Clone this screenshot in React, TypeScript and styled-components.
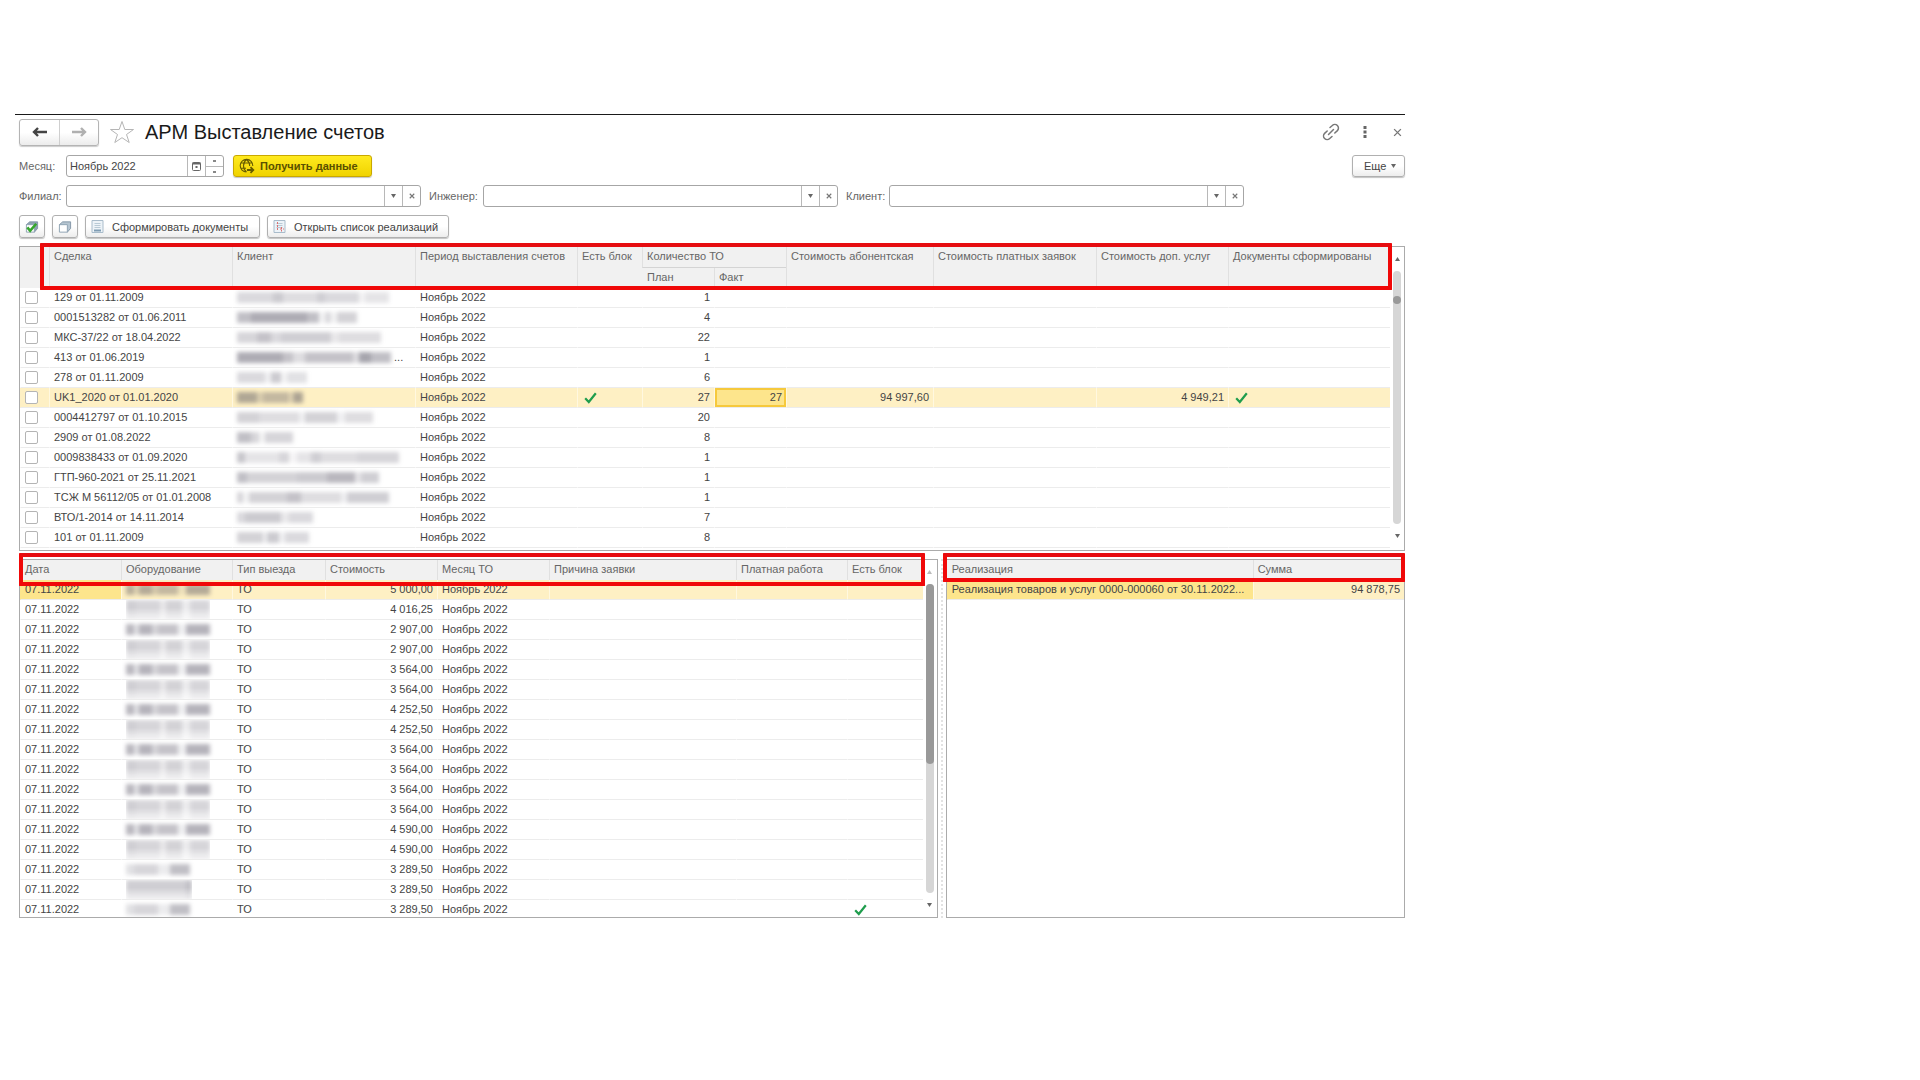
import React from 'react';
import styled, { createGlobalStyle, css } from 'styled-components';

const GlobalStyle = createGlobalStyle`
  * { box-sizing: border-box; }
  body {
    margin: 0;
    background: #fff;
    color: #444;
    font: 11px/20px "Liberation Sans", Arial, sans-serif;
  }
  button, input { font: inherit; color: inherit; }
`;

/* ---------- window frame ---------- */

const Page = styled.main`
  padding: 114px 15px 0;
`;

const Window = styled.section`
  width: 100%;
  max-width: 1390px;
  padding-left: 4px;
  border-top: 1px solid #1a1a1a;
`;

const Bar = styled.div<{ $height: number; $gap: number; $top: number }>`
  display: flex;
  align-items: center;
  height: ${p => p.$height}px;
  margin-top: ${p => p.$top}px;
  gap: ${p => p.$gap}px;
`;

const Spacer = styled.span`
  flex: 1;
`;

const Title = styled.h1`
  margin: 0;
  font-size: 20px;
  line-height: 28px;
  font-weight: 400;
  color: #1a1a1a;
  white-space: nowrap;
`;

const NavGroup = styled.div`
  display: flex;
  height: 27px;
  border: 1px solid #b4b4b4;
  border-radius: 3px;
  background: linear-gradient(#fff 50%, #ececec);
  box-shadow: 0 1px 1px #ccc;
`;

const NavButton = styled.button`
  width: 39px;
  padding: 0;
  display: grid;
  place-items: center;
  border: 0;
  background: none;
  & + & { border-left: 1px solid #cfcfcf; }
`;

const IconButton = styled.button<{ $width: number }>`
  width: ${p => p.$width}px;
  height: 24px;
  padding: 0;
  display: grid;
  place-items: center;
  border: 0;
  background: none;
`;

const buttonFace = css`
  display: flex;
  align-items: center;
  border: 1px solid #b0b0b0;
  border-radius: 3px;
  background: linear-gradient(#fff 50%, #ededed);
  box-shadow: 0 1px 1px #c4c4c4;
  white-space: nowrap;
`;

const ToolButton = styled.button<{ $width: number }>`
  ${buttonFace}
  width: ${p => p.$width}px;
  height: 23px;
  padding: 0 5px;
  gap: 8px;
`;

const PrimaryButton = styled.button`
  ${buttonFace}
  width: 139px;
  height: 22px;
  margin-left: 9px;
  padding: 0 5px;
  gap: 5px;
  border-color: #c9a800;
  background: linear-gradient(#ffea1f, #f0d300);
  font-weight: 700;
  color: #5a5000;
`;

const MoreButton = styled.button`
  ${buttonFace}
  width: 53px;
  height: 22px;
  padding: 0 5px 0 11px;
  gap: 5px;
`;

/* ---------- fields ---------- */

const Label = styled.label<{ $width: number }>`
  flex: 0 0 ${p => p.$width}px;
  color: #666;
  white-space: nowrap;
`;

const Field = styled.div<{ $width?: number }>`
  display: flex;
  flex: ${p => (p.$width ? `0 1 ${p.$width}px` : '1')};
  min-width: 0;
  height: 22px;
  border: 1px solid #a6a6a6;
  border-radius: 3px;
  background: #fff;
`;

const Input = styled.input`
  flex: 1;
  width: 0;
  min-width: 0;
  padding: 0 3px;
  border: 0;
  background: none;
  outline: none;
`;

const FieldButton = styled.button`
  flex: 0 0 18px;
  padding: 0;
  display: grid;
  place-items: center;
  border: 0;
  border-left: 1px solid #b8b8b8;
  background: none;
`;

const Stepper = styled.div`
  flex: 0 0 18px;
  display: grid;
  grid-template-rows: 1fr 1fr;
  border-left: 1px solid #b8b8b8;
`;

const StepButton = styled.button`
  padding: 0;
  display: grid;
  place-items: center;
  border: 0;
  background: none;
  & + & { border-top: 1px solid #b8b8b8; }
`;

const FilterPair = styled.div<{ $width: number }>`
  display: flex;
  flex: 0 1 ${p => p.$width}px;
  align-items: center;
  min-width: 0;
`;

/* ---------- panels and tables ---------- */

const Panel = styled.section`
  position: relative;
  display: flex;
  min-width: 0;
  min-height: 0;
  border: 1px solid #ababab;
`;

const Upper = styled(Panel)`
  margin-top: 8px;
  padding-bottom: 2px;
`;

const Lower = styled.div`
  display: grid;
  grid-template: 100% / 2fr 8px 1fr;
  height: 359px;
  margin-top: 8px;
`;

const Splitter = styled.div`
  justify-self: center;
  width: 2px;
  border-left: 2px dotted #e2e2e2;
`;

const Scroller = styled.div`
  flex: 1;
  min-width: 0;
  overflow: hidden;
`;

const Highlight = styled.div<{ $top: number; $left: number; $right: number; $height: number }>`
  position: absolute;
  top: ${p => p.$top}px;
  left: ${p => p.$left}px;
  right: ${p => p.$right}px;
  height: ${p => p.$height}px;
  border: 4px solid #f00808;
  border-top-color: #e60c10;
  border-radius: 1px;
  pointer-events: none;
`;

const Table = styled.table`
  width: 100%;
  table-layout: fixed;
  border-collapse: separate;
  border-spacing: 0;
`;

const Th = styled.th<{ $line?: boolean }>`
  height: 20px;
  padding: 0 0 0 4px;
  background: #f1f1f1;
  border-left: 1px solid #e0e0e0;
  ${p => p.$line && 'border-bottom: 1px solid #d4d4d4; height: 21px;'}
  font-weight: 400;
  line-height: 19px;
  text-align: left;
  vertical-align: top;
  white-space: nowrap;
  color: #666;
  &:first-child { border-left-color: #f1f1f1; }
`;

const Row = styled.tr<{ $selected?: boolean }>`
  background: ${p => (p.$selected ? '#fef0c4' : '#fff')};
  & > td { border-left-color: ${p => (p.$selected ? '#fff8e0' : 'transparent')}; }
  & > td:first-child { border-left-color: transparent; }
`;

const Td = styled.td<{ $num?: boolean; $active?: 'fill' | 'frame' }>`
  height: 20px;
  padding: 0 4px;
  border-left: 1px solid transparent;
  border-bottom: 1px solid #ececec;
  line-height: 19px;
  white-space: nowrap;
  overflow: hidden;
  text-overflow: ellipsis;
  text-align: ${p => (p.$num ? 'right' : 'left')};
  ${p => p.$active && 'background: #fde58c;'}
  ${p => p.$active === 'frame' && 'box-shadow: inset 0 0 0 2px #f6c93c;'}
`;

const CheckBox = styled.input`
  appearance: none;
  display: block;
  width: 13px;
  height: 13px;
  margin: 0;
  border: 1px solid #b4b4b4;
  border-radius: 2px;
  background: #fff;
`;

const ScrollTrack = styled.div`
  flex: 0 0 14px;
  display: flex;
  flex-direction: column;
  align-items: center;
  gap: 10px;
  padding: 10px 0;
`;

const Track = styled.div<{ $before: number }>`
  flex: 1;
  width: 8px;
  padding-top: ${p => p.$before}px;
  border-radius: 4px;
  background: #d6d6d6;
`;

const Thumb = styled.div<{ $size: number }>`
  height: ${p => p.$size}px;
  border-radius: 4px;
  background: #999;
`;

const TickMark = styled.svg`
  display: block;
  margin-left: 2px;
`;

/* ---------- hidden customer data ---------- */

const Smudge = styled.span<{ $full?: boolean }>`
  display: inline-flex;
  vertical-align: top;
  height: ${p => (p.$full ? 19 : 11)}px;
  margin-top: ${p => (p.$full ? 0 : 4)}px;
  filter: blur(2px);
  ${p => p.$full && 'mask-image: linear-gradient(#000 40%, rgba(0, 0, 0, 0.5) 80%);'}
`;

const Bit = styled.span<{ $w: number; $a: number }>`
  width: ${p => p.$w}px;
  background: rgba(70, 66, 84, ${p => p.$a / 100});
`;

type Bits = [number, number][];

const Redacted = ({ bits, full }: { bits: Bits; full?: boolean }) => (
  <Smudge $full={full} aria-hidden="true">
    {bits.map(([w, a], i) => <Bit key={i} $w={w} $a={a} />)}
  </Smudge>
);

/* ---------- icons ---------- */

const Arrow = ({ color, flip }: { color: string; flip?: boolean }) => (
  <svg width="16" height="12" viewBox="0 0 16 12" fill="none" stroke={color} strokeWidth="2.4">
    <path d={flip ? 'M1 6h13M10 2l4 4-4 4' : 'M15 6H2M6 2 2 6l4 4'} />
  </svg>
);

const Star = () => (
  <svg width="26" height="24" viewBox="0 0 26 24" fill="#fff" stroke="#b5b5b5">
    <path d="M13 1.500 15.800 9.500h8.700l-7 5 2.700 8L13 17.700l-7.200 4.800 2.700-8-7-5h8.700z" />
  </svg>
);

const Link = () => (
  <svg width="18" height="18" viewBox="0 0 18 18" fill="none" stroke="#777" strokeWidth="1.500" strokeLinecap="round">
    <path d="M8 4.500 10.300 2.500a3.600 3.600 0 0 1 5.100 5.100L12.800 10M10 13.500l-2.300 2a3.600 3.600 0 0 1-5.100-5.100L5.200 8M6.500 11.500l5-5" />
  </svg>
);

const Dots = () => (
  <svg width="4" height="14" viewBox="0 0 4 14" fill="#666">
    <rect x="0.500" y="1" width="3" height="3" /><rect x="0.500" y="5.500" width="3" height="3" /><rect x="0.500" y="10" width="3" height="3" />
  </svg>
);

const Cross = ({ size }: { size: number }) => (
  <svg width={size} height={size} viewBox="0 0 8 8" stroke="#777" strokeWidth={size > 6 ? 1.2 : 1.5}>
    <path d="M1 1l6 6M7 1 1 7" />
  </svg>
);

const Caret = ({ up, color = '#666' }: { up?: boolean; color?: string }) => (
  <svg width="5" height="4" viewBox="0 0 5 4" fill={color}>
    <path d={up ? 'M0 4h5L2.500 0z' : 'M0 0h5L2.500 4z'} />
  </svg>
);

const Tick = () => (
  <TickMark width="13" height="12" viewBox="0 0 13 12" fill="none" stroke="#1f9d4d" strokeWidth="2.200">
    <path d="M1.200 6.200 4.800 10 11.800 1.200" />
  </TickMark>
);

const Calendar = () => (
  <svg width="9" height="10" viewBox="0 0 9 10">
    <rect x="0.500" y="1.500" width="8" height="8" rx="1" fill="#fff" stroke="#666" />
    <path d="M0.500 2.500h8" stroke="#666" strokeWidth="2" />
    <rect x="3.500" y="5" width="2" height="2" fill="#666" />
  </svg>
);

const Globe = () => (
  <svg width="16" height="16" viewBox="0 0 16 16" fill="none" stroke="#665b00" strokeWidth="1.100">
    <path d="M13.800 8A6.300 6.300 0 1 0 7.500 14M7.500 1.500C3.500 4.500 3.500 11 7.500 14M7.500 1.500c2.500 2 3.200 4 3.200 6.500M2 5h11M1.500 10.300H7" />
    <path d="M8 12h6M11.500 9.200 14.300 12l-2.800 2.800" strokeWidth="1.800" />
  </svg>
);

const Cube = ({ checked }: { checked?: boolean }) => (
  <svg width="15" height="14" viewBox="0 0 15 14">
    <path d="M1.500 4.500 5 1.500h8.500v7L10 12.500z" fill={checked ? '#8fa3b3' : '#b5c5d1'} stroke="#8296a6" />
    <path d="M1.500 4.500H10v8H1.500z" fill="#fff" stroke="#8ba0b0" />
    {checked && <path d="M2.500 7.500 5.500 11 12 3.500" fill="none" stroke="#35a72c" strokeWidth="2.800" />}
  </svg>
);

const Sheet = ({ marked }: { marked?: boolean }) => (
  <svg width="13" height="13" viewBox="0 0 13 13" fill="none">
    <path d="M1 .5h11v12H1z" fill="#edf3f8" stroke="#a9bccb" />
    <path d="M3.500 3.500h6M3.500 5.500h6M3.500 7.500h6" stroke="#b9cad6" />
    {marked
      ? <path d="M4.500 2v9M8.500 7v4.500M7 9h4" stroke="#dc7070" strokeDasharray="2 1" />
      : <path d="M3 10.500h7" stroke="#7f9cb3" strokeWidth="2" />}
  </svg>
);

const StepDot = () => (
  <svg width="3" height="2" viewBox="0 0 3 2"><rect width="3" height="2" fill="#888" /></svg>
);

/* ---------- data ---------- */

interface Deal { deal: string; plan: number; bits: Bits; more?: boolean; selected?: boolean }

const deals: Deal[] = [
  { deal: '129 от 01.11.2009', plan: 1, bits: [[36, 20], [10, 28], [34, 18], [8, 26], [34, 20], [6, 6], [24, 14]] },
  { deal: '0001513282 от 01.06.2011', plan: 4, bits: [[14, 34], [56, 44], [12, 34], [6, 6], [6, 20], [6, 6], [20, 24]] },
  { deal: 'МКС-37/22 от 18.04.2022', plan: 22, bits: [[20, 22], [14, 32], [10, 20], [50, 26], [8, 12], [42, 18]] },
  { deal: '413 от 01.06.2019', plan: 1, bits: [[46, 44], [10, 32], [12, 18], [48, 32], [6, 18], [12, 48], [20, 34]], more: true },
  { deal: '278 от 01.11.2009', plan: 6, bits: [[28, 20], [6, 8], [10, 28], [6, 6], [20, 16]] },
  { deal: 'UK1_2020 от 01.01.2020', plan: 27, bits: [[20, 42], [6, 20], [26, 32], [4, 14], [10, 44]], selected: true },
  { deal: '0004412797 от 01.10.2015', plan: 20, bits: [[22, 24], [40, 18], [6, 8], [32, 24], [8, 8], [28, 18]] },
  { deal: '2909 от 01.08.2022', plan: 8, bits: [[14, 34], [8, 22], [6, 6], [28, 22]] },
  { deal: '0009838433 от 01.09.2020', plan: 1, bits: [[8, 30], [34, 14], [10, 22], [8, 5], [14, 14], [10, 26], [36, 18], [42, 22]] },
  { deal: 'ГТП-960-2021 от 25.11.2021', plan: 1, bits: [[10, 34], [50, 24], [30, 28], [28, 38], [6, 14], [18, 26]] },
  { deal: 'ТСЖ М 56112/05 от 01.01.2008', plan: 1, bits: [[6, 22], [6, 6], [38, 24], [14, 32], [40, 18], [6, 8], [42, 26]] },
  { deal: 'ВТО/1-2014 от 14.11.2014', plan: 7, bits: [[8, 20], [36, 28], [8, 12], [24, 20]] },
  { deal: '101 от 01.11.2009', plan: 8, bits: [[26, 24], [4, 8], [12, 28], [6, 8], [24, 20]] },
];

const costs = [
  '5 000,00', '4 016,25', '2 907,00', '2 907,00', '3 564,00', '3 564,00', '4 252,50', '4 252,50', '3 564,00',
  '3 564,00', '3 564,00', '3 564,00', '4 590,00', '4 590,00', '3 289,50', '3 289,50', '3 289,50',
];

const equipmentBits = (i: number): Bits => {
  if (i === 15) return [[60, 26], [6, 34]];
  if (i > 13) return [[8, 16], [24, 22], [12, 10], [20, 34]];
  return i % 2
    ? [[10, 26], [24, 22], [6, 12], [16, 24], [8, 10], [20, 22]]
    : [[8, 38], [5, 16], [13, 40], [6, 22], [20, 32], [8, 8], [24, 40]];
};

const Combo = ({ id, label, labelWidth }: { id: string; label: string; labelWidth: number }) => (
  <FilterPair $width={labelWidth + 355}>
    <Label htmlFor={id} $width={labelWidth}>{label}</Label>
    <Field>
      <Input id={id} type="text" />
      <FieldButton type="button" aria-label="Выбрать"><Caret /></FieldButton>
      <FieldButton type="button" aria-label="Очистить"><Cross size={6} /></FieldButton>
    </Field>
  </FilterPair>
);

const Cols = ({ widths }: { widths: (number | undefined)[] }) => (
  <colgroup>{widths.map((w, i) => <col key={i} width={w} />)}</colgroup>
);

export default function App() {
  return (
    <Page>
      <GlobalStyle />
      <Window>
        <Bar as="header" $height={28} $gap={10} $top={3}>
          <NavGroup>
            <NavButton type="button" aria-label="Назад"><Arrow color="#444" /></NavButton>
            <NavButton type="button" aria-label="Вперед"><Arrow color="#b0b0b0" flip /></NavButton>
          </NavGroup>
          <Star />
          <Title>АРМ Выставление счетов</Title>
          <Spacer />
          <IconButton type="button" $width={20} aria-label="Ссылка"><Link /></IconButton>
          <IconButton type="button" $width={28} aria-label="Меню"><Dots /></IconButton>
          <IconButton type="button" $width={16} aria-label="Закрыть"><Cross size={9} /></IconButton>
        </Bar>

        <Bar $height={22} $gap={0} $top={9}>
          <Label htmlFor="month" $width={47}>Месяц:</Label>
          <Field $width={158}>
            <Input id="month" type="text" defaultValue="Ноябрь 2022" />
            <FieldButton type="button" aria-label="Календарь"><Calendar /></FieldButton>
            <Stepper>
              <StepButton type="button" aria-label="Следующий"><StepDot /></StepButton>
              <StepButton type="button" aria-label="Предыдущий"><StepDot /></StepButton>
            </Stepper>
          </Field>
          <PrimaryButton type="button"><Globe />Получить данные</PrimaryButton>
          <Spacer />
          <MoreButton type="button">Еще<Caret /></MoreButton>
        </Bar>

        <Bar $height={22} $gap={8} $top={8}>
          <Combo id="branch" label="Филиал:" labelWidth={47} />
          <Combo id="engineer" label="Инженер:" labelWidth={54} />
          <Combo id="client" label="Клиент:" labelWidth={43} />
        </Bar>

        <Bar $height={23} $gap={7} $top={8}>
          <ToolButton type="button" $width={26} aria-label="Отметить все"><Cube checked /></ToolButton>
          <ToolButton type="button" $width={26} aria-label="Снять отметки"><Cube /></ToolButton>
          <ToolButton type="button" $width={175}><Sheet />Сформировать документы</ToolButton>
          <ToolButton type="button" $width={182}><Sheet marked />Открыть список реализаций</ToolButton>
        </Bar>

        <Upper>
          <Scroller>
            <Table>
              <Cols widths={[29, 183, 183, 162, 65, 72, 72, 147, 163, 132, undefined]} />
              <thead>
                <tr>
                  <Th rowSpan={2} aria-label="Отметка" />
                  <Th rowSpan={2}>Сделка</Th>
                  <Th rowSpan={2}>Клиент</Th>
                  <Th rowSpan={2}>Период выставления счетов</Th>
                  <Th rowSpan={2}>Есть блок</Th>
                  <Th colSpan={2} $line>Количество ТО</Th>
                  <Th rowSpan={2}>Стоимость абонентская</Th>
                  <Th rowSpan={2}>Стоимость платных заявок</Th>
                  <Th rowSpan={2}>Стоимость доп. услуг</Th>
                  <Th rowSpan={2}>Документы сформированы</Th>
                </tr>
                <tr>
                  <Th>План</Th>
                  <Th>Факт</Th>
                </tr>
              </thead>
              <tbody>
                {deals.map(d => (
                  <Row key={d.deal} $selected={d.selected}>
                    <Td><CheckBox type="checkbox" aria-label={d.deal} /></Td>
                    <Td>{d.deal}</Td>
                    <Td><Redacted bits={d.bits} />{d.more && ' ...'}</Td>
                    <Td>Ноябрь 2022</Td>
                    <Td>{d.selected && <Tick />}</Td>
                    <Td $num>{d.plan}</Td>
                    <Td $num $active={d.selected ? 'frame' : undefined}>{d.selected && '27'}</Td>
                    <Td $num>{d.selected && '94 997,60'}</Td>
                    <Td />
                    <Td $num>{d.selected && '4 949,21'}</Td>
                    <Td>{d.selected && <Tick />}</Td>
                  </Row>
                ))}
              </tbody>
            </Table>
          </Scroller>
          <ScrollTrack>
            <Caret up />
            <Track $before={25}><Thumb $size={8} /></Track>
            <Caret />
          </ScrollTrack>
          <Highlight $top={-4} $left={20} $right={12} $height={47} />
        </Upper>

        <Lower>
          <Panel>
            <Scroller>
              <Table>
                <Cols widths={[101, 111, 93, 112, 112, 187, 111, undefined]} />
                <thead>
                  <tr>
                    {['Дата', 'Оборудование', 'Тип выезда', 'Стоимость', 'Месяц ТО', 'Причина заявки', 'Платная работа', 'Есть блок']
                      .map(h => <Th key={h}>{h}</Th>)}
                  </tr>
                </thead>
                <tbody>
                  {costs.map((cost, i) => (
                    <Row key={i} $selected={i === 0}>
                      <Td $active={i === 0 ? 'fill' : undefined}>07.11.2022</Td>
                      <Td><Redacted bits={equipmentBits(i)} full={i % 2 === 1} /></Td>
                      <Td>ТО</Td>
                      <Td $num>{cost}</Td>
                      <Td>Ноябрь 2022</Td>
                      <Td />
                      <Td />
                      <Td>{i === costs.length - 1 && <Tick />}</Td>
                    </Row>
                  ))}
                </tbody>
              </Table>
            </Scroller>
            <ScrollTrack>
              <Caret up color="#bbb" />
              <Track $before={0}><Thumb $size={180} /></Track>
              <Caret />
            </ScrollTrack>
            <Highlight $top={-7} $left={-1} $right={12} $height={33} />
          </Panel>
          <Splitter />
          <Panel>
            <Scroller>
              <Table>
                <Cols widths={[306, undefined]} />
                <thead>
                  <tr><Th>Реализация</Th><Th>Сумма</Th></tr>
                </thead>
                <tbody>
                  <Row $selected>
                    <Td $active="fill">Реализация товаров и услуг 0000-000060 от 30.11.2022...</Td>
                    <Td $num>94 878,75</Td>
                  </Row>
                </tbody>
              </Table>
            </Scroller>
            <Highlight $top={-7} $left={-4} $right={-1} $height={29} />
          </Panel>
        </Lower>
      </Window>
    </Page>
  );
}
